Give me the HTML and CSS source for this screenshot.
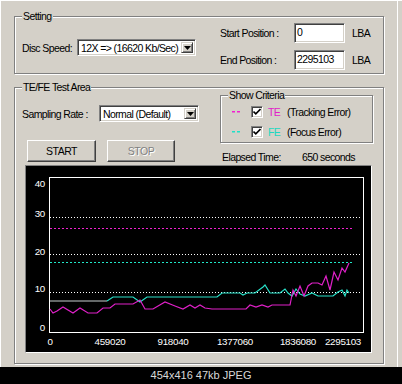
FILE: index.html
```html
<!DOCTYPE html>
<html>
<head>
<meta charset="utf-8">
<link rel="stylesheet" href="styles.css">
</head>
<body>
<div class="window">
  <div class="group setting">
    <span class="gtitle">Setting</span>
    <div class="disc">
      <span class="lbl disc-lbl">Disc Speed:</span>
      <div class="combo w-disc">
        <span class="combo-text">12X =&gt; (16620 Kb/Sec)</span>
        <span class="combo-btn"><svg width="7" height="4" viewBox="0 0 7 4"><path d="M0 0H7L3.5 4Z" fill="#000"/></svg></span>
      </div>
    </div>
    <div class="pos">
      <div class="pos-row"><span class="lbl pos-lbl">Start Position :</span><span class="edit">0</span><span class="lbl lba">LBA</span></div>
      <div class="pos-row"><span class="lbl pos-lbl">End Position :</span><span class="edit">2295103</span><span class="lbl lba">LBA</span></div>
    </div>
  </div>

  <div class="group tefe">
    <span class="gtitle">TE/FE Test Area</span>
    <div class="top">
      <div class="left">
        <div class="samp">
          <span class="lbl samp-lbl">Sampling Rate :</span>
          <div class="combo w-samp">
            <span class="combo-text">Normal (Default)</span>
            <span class="combo-btn"><svg width="7" height="4" viewBox="0 0 7 4"><path d="M0 0H7L3.5 4Z" fill="#000"/></svg></span>
          </div>
        </div>
        <div class="btns">
          <button class="btn btn-start">START</button>
          <button class="btn btn-stop">STOP</button>
        </div>
      </div>
      <div class="right">
        <div class="group crit">
          <span class="gtitle">Show Criteria</span>
          <div class="crow">
            <span class="dash"><svg width="9" height="2" viewBox="0 0 9 2"><path d="M0 0H3V1.5H0ZM5 0H8V1.5H5Z" fill="#f020d0"/></svg></span>
            <span class="chk"><svg width="8" height="8" viewBox="0 0 8 8"><path d="M0.5 3.5L2.8 5.8L7.5 1" stroke="#000" stroke-width="1.6" fill="none"/></svg></span>
            <span class="code te">TE</span>
            <span class="lbl">(Tracking Error)</span>
          </div>
          <div class="crow">
            <span class="dash"><svg width="9" height="2" viewBox="0 0 9 2"><path d="M0 0H3V1.5H0ZM5 0H8V1.5H5Z" fill="#20e0c8"/></svg></span>
            <span class="chk"><svg width="8" height="8" viewBox="0 0 8 8"><path d="M0.5 3.5L2.8 5.8L7.5 1" stroke="#000" stroke-width="1.6" fill="none"/></svg></span>
            <span class="code fe">FE</span>
            <span class="lbl">(Focus Error)</span>
          </div>
        </div>
        <div class="elapsed">
          <span class="lbl el-lbl">Elapsed Time:</span>
          <span class="lbl">650 seconds</span>
        </div>
      </div>
    </div>
    <div class="chart">
      <svg class="plot" width="345" height="186" viewBox="26 166 345 186">
        <g shape-rendering="crispEdges">
          <line x1="50" y1="217.5" x2="361" y2="217.5" stroke="#fff" stroke-dasharray="1 2"/>
          <line x1="50" y1="254.5" x2="361" y2="254.5" stroke="#fff" stroke-dasharray="1 2"/>
          <line x1="50" y1="292.5" x2="361" y2="292.5" stroke="#fff" stroke-dasharray="1 2"/>
          <line x1="50" y1="228.5" x2="353" y2="228.5" stroke="#f020d0" stroke-dasharray="2 2"/>
          <line x1="50" y1="262.5" x2="353" y2="262.5" stroke="#20e8c8" stroke-dasharray="2 2"/>
          <path d="M49.5 177 V332.5 H363.5 V177.5 H49.5" stroke="#fff" fill="none"/>
        </g>
        <polyline fill="none" stroke="#c8d0d0" stroke-width="1" points="50,301 107,301"/>
        <polyline fill="none" stroke="#28e0c8" stroke-width="1.2" points="107,301 113,297 133,297 140,302 147,297 217,297 222,293 240,293 243,295 247,293 255,293 263,287 265,285 270,293 280,293 285,289 288,293 292,296 296,289 300,294 305,296 312,293 318,296 325,296 333,296 338,292 342,290 345,296 347,290 349,293"/>
        <polyline fill="none" stroke="#e020c8" stroke-width="1.2" points="50,309 53,313 57,311 63,307 73,313 80,308 88,313 97,313 103,308 110,308 115,304 133,304 140,300 145,309 153,309 165,302 175,306 183,309 190,305 195,308 200,305 205,308 212,309 246,309 250,305 256,307 262,305 268,307 272,305 290,305 293,290 296,296 300,286 304,296 308,286 312,283 318,283 322,285 326,276 330,290 334,272 338,280 342,268 345,272 349,263"/>
        <g class="ylab" text-anchor="end">
          <text x="45" y="187">40</text>
          <text x="45" y="217">30</text>
          <text x="45" y="255">20</text>
          <text x="45" y="292">10</text>
          <text x="45" y="331">0</text>
        </g>
        <g class="xlab" text-anchor="middle">
          <text x="50" y="345">0</text>
          <text x="110" y="345">459020</text>
          <text x="173" y="345">918040</text>
          <text x="235" y="345">1377060</text>
          <text x="298" y="345">1836080</text>
          <text x="343" y="345">2295103</text>
        </g>
      </svg>
    </div>
  </div>
</div>
<div class="status">454x416 47kb JPEG</div>
</body>
</html>
```

FILE: styles.css
```css
* { box-sizing: border-box; }

html, body {
  margin: 0;
  padding: 0;
}

body {
  width: 402px;
  height: 384px;
  overflow: hidden;
  background: #d4d0c8;
  font-family: "Liberation Sans", Arial, sans-serif;
  font-size: 10.5px;
  letter-spacing: -0.6px;
  color: #000;
}

.window {
  height: 367px;
  padding: 16px 0 0 14px;
  box-shadow: inset 1px 1px 0 #fff, inset -4px 0 0 #d4d0c8, inset -5px 0 0 #fff;
}

.group {
  position: relative;
  border: 1px solid #808080;
  box-shadow: inset 1px 1px 0 #fff, 1px 1px 0 #fff;
}

.gtitle {
  position: absolute;
  top: -7px;
  left: 7px;
  padding: 0 1px;
  line-height: 12px;
  background: #d4d0c8;
  white-space: nowrap;
}

.lbl {
  white-space: nowrap;
  line-height: 12px;
}

/* Setting */
.setting {
  width: 370px;
  height: 58px;
  padding: 6px 0 0 7px;
  display: flex;
}

.disc {
  margin-top: 16px;
  display: flex;
  align-items: center;
  height: 17px;
}

.disc-lbl { width: 55px; }

.combo {
  height: 17px;
  background: #fff;
  border-style: solid;
  border-width: 1px;
  border-color: #808080 #fff #fff #808080;
  box-shadow: inset 1px 1px 0 #404040, inset -1px -1px 0 #d4d0c8;
  display: flex;
  align-items: center;
  padding: 2px 2px 2px 3px;
}

.w-disc { width: 119px; }
.w-samp { width: 100px; }

.combo-text {
  flex: 1;
  white-space: nowrap;
  overflow: hidden;
  line-height: 12px;
}

.combo-btn {
  width: 12px;
  height: 11px;
  background: #d4d0c8;
  border-style: solid;
  border-width: 1px;
  border-color: #d4d0c8 #404040 #404040 #d4d0c8;
  box-shadow: inset 1px 1px 0 #fff, inset -1px -1px 0 #808080;
  display: flex;
  align-items: center;
  justify-content: center;
}

.combo-btn svg { display: block; }

.pos {
  margin-left: 24px;
  display: flex;
  flex-direction: column;
  gap: 7px;
}

.pos-row {
  display: flex;
  align-items: center;
  height: 20px;
}

.pos-lbl { width: 74px; }

.edit {
  width: 51px;
  height: 20px;
  background: #fff;
  border-style: solid;
  border-width: 1px;
  border-color: #808080 #fff #fff #808080;
  box-shadow: inset 1px 1px 0 #404040, inset -1px -1px 0 #d4d0c8;
  padding: 2px 0 0 2px;
  line-height: 12px;
}

.lba { margin-left: 7px; }

/* TE/FE */
.tefe {
  margin-top: 13px;
  width: 370px;
  height: 277px;
  padding: 0 0 0 7px;
}

.top {
  display: flex;
  height: 77px;
}

.left {
  width: 198px;
  display: flex;
  flex-direction: column;
}

.samp {
  margin-top: 17px;
  display: flex;
  align-items: center;
}

.samp-lbl { width: 77px; }

.btns {
  margin-top: 18px;
  margin-left: 5px;
  display: flex;
  gap: 11px;
}

.btn {
  width: 69px;
  height: 22px;
  padding: 0;
  margin: 0;
  font: inherit;
  letter-spacing: -0.5px;
  background: #d4d0c8;
  border-style: solid;
  border-width: 1px;
  border-color: #fff #404040 #404040 #fff;
  box-shadow: inset -1px -1px 0 #808080;
  color: #000;
}

.btn-stop {
  width: 68px;
  color: #808080;
  text-shadow: 1px 1px 0 #fff;
}

.right {
  display: flex;
  flex-direction: column;
}

.crit {
  margin-top: 7px;
  width: 153px;
  height: 48px;
  padding: 8px 0 0 11px;
  display: flex;
  flex-direction: column;
  gap: 4px;
}

.crow {
  display: flex;
  align-items: center;
  height: 16px;
}

.dash {
  width: 19px;
  display: flex;
  align-items: center;
}

.dash svg { display: block; }

.te { color: #e020c8; }
.fe { color: #20d8c0; }

.chk {
  width: 12px;
  height: 12px;
  margin-right: 5px;
  background: #fff;
  border-style: solid;
  border-width: 1px;
  border-color: #808080 #fff #fff #808080;
  box-shadow: inset 1px 1px 0 #404040, inset -1px -1px 0 #d4d0c8;
  display: flex;
  align-items: center;
  justify-content: center;
}

.chk svg { display: block; }

.code {
  width: 19px;
  line-height: 12px;
}

.elapsed {
  margin-top: 8px;
  margin-left: 2px;
  display: flex;
}

.el-lbl { width: 80px; }

.chart {
  margin-left: 3px;
  width: 347px;
  height: 188px;
  background: #000;
  border-style: solid;
  border-width: 1px;
  border-color: #808080 #fff #fff #808080;
}

.plot { display: block; }

.plot text {
  fill: #fff;
  font-family: "Liberation Sans", Arial, sans-serif;
  font-size: 9.8px;
  letter-spacing: -0.3px;
}

.status {
  height: 17px;
  background: #000;
  color: #d8d8d8;
  font-size: 11px;
  letter-spacing: 0;
  line-height: 17px;
  text-align: center;
}
```
